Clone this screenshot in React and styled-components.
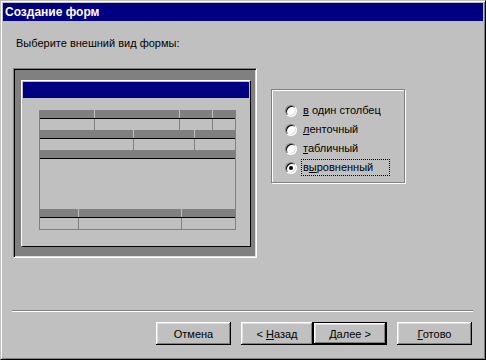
import React from "react";
import styled, { createGlobalStyle } from "styled-components";

const GlobalStyle = createGlobalStyle`
  body {
    margin: 0;
    background: #c0c0c0;
    font-family: "Liberation Sans", Arial, sans-serif;
    font-size: 11px;
    color: #000;
  }
`;

const Window = styled.div`
  width: 486px;
  height: 360px;
  box-sizing: border-box;
  padding: 2px;
  background: #c0c0c0;
  border: 1px solid;
  border-color: #c0c0c0 #000 #000 #c0c0c0;
  box-shadow: inset 1px 1px 0 #fff, inset -1px -1px 0 #808080;
  display: flex;
  flex-direction: column;
`;

const TitleBar = styled.div`
  height: 18px;
  line-height: 18px;
  padding-left: 2px;
  background: #000080;
  color: #fff;
  font-weight: bold;
  font-size: 12px;
`;

const Prompt = styled.div`
  margin-top: 16px;
  padding-left: 13px;
  line-height: 13px;
`;

const MainRow = styled.div`
  margin-top: 18px;
  padding-left: 10px;
  display: flex;
  align-items: flex-start;
  gap: 14px;
`;

const PreviewFrame = styled.div`
  width: 244px;
  height: 190px;
  box-sizing: border-box;
  padding: 11px 5px 10px 7px;
  background: #808080;
  border: 1px solid;
  border-color: #808080 #fff #fff #808080;
  box-shadow: inset 1px 1px 0 #000, inset -1px -1px 0 #dfdfdf;
`;

const FormPanel = styled.div`
  width: 230px;
  height: 167px;
  box-sizing: border-box;
  padding: 1px;
  background: #c0c0c0;
  border: 1px solid;
  border-color: #fff #000 #000 #fff;
`;

const FormTitle = styled.div`
  height: 16px;
  background: #000080;
`;

const Layout = styled.div`
  width: 197px;
  margin: 12px 0 0 16px;
`;

const HeadRow = styled.div`
  display: grid;
  grid-template-columns: ${({ $cols }) => $cols};
  gap: 1px;
  height: 8px;
  background: #c0c0c0;

  span {
    background: #808080;
  }
`;

const Rule = styled.div`
  height: 1px;
  background: #000;
  border-left: 1px solid #808080;
  border-right: 1px solid #808080;
`;

const BodyRow = styled.div`
  display: grid;
  grid-template-columns: ${({ $cols }) => $cols};
  gap: 1px;
  padding: 0 1px;
  height: ${({ $h }) => $h}px;
  background: #808080;
  border-bottom: ${({ $last }) => ($last ? "1px solid #808080" : "0")};

  span {
    background: #c0c0c0;
  }
`;

const GroupBox = styled.div`
  width: 134px;
  height: 94px;
  margin-top: 21px;
  box-sizing: border-box;
  padding: 11px 0 0 13px;
  border: 1px solid #808080;
  box-shadow: inset 1px 1px 0 #fff, 1px 1px 0 #fff;
`;

const Option = styled.div`
  height: 19px;
  display: flex;
  align-items: center;
  gap: 4px;
`;

const Radio = styled.span`
  width: 12px;
  height: 12px;
  box-sizing: border-box;
  border-radius: 50%;
  background: #fff;
  border: 1px solid;
  border-color: #808080 #fff #fff #808080;
  box-shadow: inset 1px 1px 0 #000, inset -1px -1px 0 #dfdfdf;
  display: flex;
  align-items: center;
  justify-content: center;

  &::after {
    content: "";
    width: 4px;
    height: 4px;
    border-radius: 50%;
    background: ${({ $checked }) => ($checked ? "#000" : "transparent")};
  }
`;

const OptionLabel = styled.span`
  line-height: 15px;
  padding: ${({ $focus }) => ($focus ? "0 16px 0 1px" : "0 1px")};
  border: 1px dotted ${({ $focus }) => ($focus ? "#000" : "transparent")};
`;

const Separator = styled.div`
  margin: 52px 0 0 9px;
  width: 461px;
  height: 0;
  border-top: 1px solid #808080;
  border-bottom: 1px solid #fff;
`;

const ButtonRow = styled.div`
  margin-top: 10px;
  padding-right: 11px;
  display: flex;
  justify-content: flex-end;
`;

const Button = styled.button`
  width: ${({ $w }) => $w}px;
  height: 23px;
  margin-left: ${({ $gap }) => $gap}px;
  box-sizing: border-box;
  padding: 0;
  font: inherit;
  color: #000;
  background: #c0c0c0;
  border: ${({ $default }) => ($default ? "1px solid #000" : "0")};
  box-shadow: inset -1px -1px 0 #000, inset 1px 1px 0 #fff,
    inset -2px -2px 0 #808080, inset 2px 2px 0 #dfdfdf;
`;

const sections = [
  { head: "55px 84px 32px 1fr", body: "54px 84px 32px 1fr", cells: 4, h: 11 },
  { head: "94px 60px 1fr", body: "93px 60px 1fr", cells: 3, h: 11 },
  { head: "1fr", body: "1fr", cells: 1, h: 50 },
  { head: "39px 102px 1fr", body: "38px 102px 1fr", cells: 3, h: 11 },
];

const options = [
  { key: "a", pre: "", mn: "в", rest: " один столбец" },
  { key: "b", pre: "", mn: "л", rest: "енточный" },
  { key: "c", pre: "", mn: "т", rest: "абличный" },
  { key: "d", pre: "в", mn: "ы", rest: "ровненный", checked: true },
];

const Preview = () => (
  <PreviewFrame>
    <FormPanel>
      <FormTitle />
      <Layout>
        {sections.map((s, i) => (
          <React.Fragment key={i}>
            <HeadRow $cols={s.head}>
              {Array.from({ length: s.cells }, (_, c) => (
                <span key={c} />
              ))}
            </HeadRow>
            <Rule />
            <BodyRow $cols={s.body} $h={s.h} $last={i === sections.length - 1}>
              {Array.from({ length: s.cells }, (_, c) => (
                <span key={c} />
              ))}
            </BodyRow>
          </React.Fragment>
        ))}
      </Layout>
    </FormPanel>
  </PreviewFrame>
);

const App = () => (
  <>
    <GlobalStyle />
    <Window>
      <TitleBar>Создание форм</TitleBar>
      <Prompt>Выберите внешний вид формы:</Prompt>
      <MainRow>
        <Preview />
        <GroupBox>
          {options.map((o) => (
            <Option key={o.key}>
              <Radio $checked={o.checked} />
              <OptionLabel $focus={o.checked}>
                {o.pre}
                <u>{o.mn}</u>
                {o.rest}
              </OptionLabel>
            </Option>
          ))}
        </GroupBox>
      </MainRow>
      <Separator />
      <ButtonRow>
        <Button $w={75} $gap={0}>
          Отмена
        </Button>
        <Button $w={72} $gap={10}>
          &lt; <u>Н</u>азад
        </Button>
        <Button $w={74} $gap={0} $default>
          <u>Д</u>алее &gt;
        </Button>
        <Button $w={75} $gap={10}>
          <u>Г</u>отово
        </Button>
      </ButtonRow>
    </Window>
  </>
);

export default App;
